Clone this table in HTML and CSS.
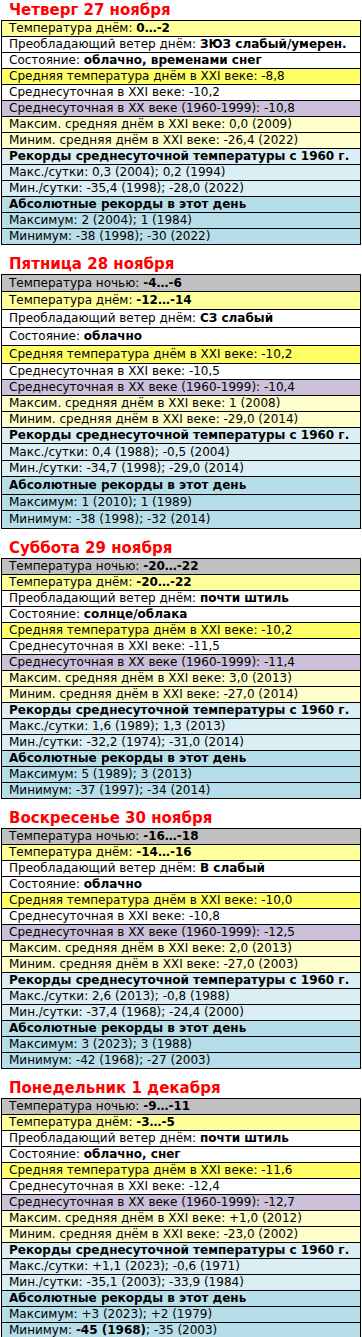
FILE: index.html
```html
<!DOCTYPE html>
<html lang="ru">
<head>
<meta charset="utf-8">
<title>Прогноз погоды</title>
<link rel="stylesheet" href="styles.css">
</head>
<body>

<section class="day">
  <h2 class="day-title">Четверг 27 ноября</h2>
  <table class="wx">
    <tr class="c-day"><td>Температура днём: <b>0…-2</b></td></tr>
    <tr class="c-white"><td>Преобладающий ветер днём: <b>ЗЮЗ слабый/умерен.</b></td></tr>
    <tr class="c-white"><td>Состояние: <b>облачно, временами снег</b></td></tr>
    <tr class="c-avg"><td>Средняя температура днём в XXI веке: -8,8</td></tr>
    <tr class="c-white"><td>Среднесуточная в XXI веке: -10,2</td></tr>
    <tr class="c-xx"><td>Среднесуточная в XX веке (1960-1999): -10,8</td></tr>
    <tr class="c-ext"><td>Максим. средняя днём в XXI веке: 0,0 (2009)</td></tr>
    <tr class="c-ext"><td>Миним. средняя днём в XXI веке: -26,4 (2022)</td></tr>
    <tr class="c-rec head"><td>Рекорды среднесуточной температуры с 1960 г.</td></tr>
    <tr class="c-rec"><td>Макс./сутки: 0,3 (2004); 0,2 (1994)</td></tr>
    <tr class="c-rec"><td>Мин./сутки: -35,4 (1998); -28,0 (2022)</td></tr>
    <tr class="c-abs head"><td>Абсолютные рекорды в этот день</td></tr>
    <tr class="c-abs"><td>Максимум: 2 (2004); 1 (1984)</td></tr>
    <tr class="c-abs"><td>Минимум: -38 (1998); -30 (2022)</td></tr>
  </table>
</section>

<section class="day">
  <h2 class="day-title">Пятница 28 ноября</h2>
  <table class="wx">
    <tr class="c-night mid"><td>Температура ночью: <b>-4…-6</b></td></tr>
    <tr class="c-day tall"><td>Температура днём: <b>-12…-14</b></td></tr>
    <tr class="c-white tall"><td>Преобладающий ветер днём: <b>СЗ слабый</b></td></tr>
    <tr class="c-white tall"><td>Состояние: <b>облачно</b></td></tr>
    <tr class="c-avg tall"><td>Средняя температура днём в XXI веке: -10,2</td></tr>
    <tr class="c-white"><td>Среднесуточная в XXI веке: -10,5</td></tr>
    <tr class="c-xx"><td>Среднесуточная в XX веке (1960-1999): -10,4</td></tr>
    <tr class="c-ext"><td>Максим. средняя днём в XXI веке: 1 (2008)</td></tr>
    <tr class="c-ext"><td>Миним. средняя днём в XXI веке: -29,0 (2014)</td></tr>
    <tr class="c-rec head"><td>Рекорды среднесуточной температуры с 1960 г.</td></tr>
    <tr class="c-rec mid"><td>Макс./сутки: 0,4 (1988); -0,5 (2004)</td></tr>
    <tr class="c-rec"><td>Мин./сутки: -34,7 (1998); -29,0 (2014)</td></tr>
    <tr class="c-abs head tall"><td>Абсолютные рекорды в этот день</td></tr>
    <tr class="c-abs"><td>Максимум: 1 (2010); 1 (1989)</td></tr>
    <tr class="c-abs tall"><td>Минимум: -38 (1998); -32 (2014)</td></tr>
  </table>
</section>

<section class="day">
  <h2 class="day-title">Суббота 29 ноября</h2>
  <table class="wx">
    <tr class="c-night"><td>Температура ночью: <b>-20…-22</b></td></tr>
    <tr class="c-day"><td>Температура днём: <b>-20…-22</b></td></tr>
    <tr class="c-white"><td>Преобладающий ветер днём: <b>почти штиль</b></td></tr>
    <tr class="c-white"><td>Состояние: <b>солнце/облака</b></td></tr>
    <tr class="c-avg"><td>Средняя температура днём в XXI веке: -10,2</td></tr>
    <tr class="c-white"><td>Среднесуточная в XXI веке: -11,5</td></tr>
    <tr class="c-xx"><td>Среднесуточная в XX веке (1960-1999): -11,4</td></tr>
    <tr class="c-ext"><td>Максим. средняя днём в XXI веке: 3,0 (2013)</td></tr>
    <tr class="c-ext"><td>Миним. средняя днём в XXI веке: -27,0 (2014)</td></tr>
    <tr class="c-rec head"><td>Рекорды среднесуточной температуры с 1960 г.</td></tr>
    <tr class="c-rec"><td>Макс./сутки: 1,6 (1989); 1,3 (2013)</td></tr>
    <tr class="c-rec"><td>Мин./сутки: -32,2 (1974); -31,0 (2014)</td></tr>
    <tr class="c-abs head"><td>Абсолютные рекорды в этот день</td></tr>
    <tr class="c-abs"><td>Максимум: 5 (1989); 3 (2013)</td></tr>
    <tr class="c-abs"><td>Минимум: -37 (1997); -34 (2014)</td></tr>
  </table>
</section>

<section class="day">
  <h2 class="day-title">Воскресенье 30 ноября</h2>
  <table class="wx">
    <tr class="c-night"><td>Температура ночью: <b>-16…-18</b></td></tr>
    <tr class="c-day"><td>Температура днём: <b>-14…-16</b></td></tr>
    <tr class="c-white"><td>Преобладающий ветер днём: <b>В слабый</b></td></tr>
    <tr class="c-white"><td>Состояние: <b>облачно</b></td></tr>
    <tr class="c-avg"><td>Средняя температура днём в XXI веке: -10,0</td></tr>
    <tr class="c-white"><td>Среднесуточная в XXI веке: -10,8</td></tr>
    <tr class="c-xx"><td>Среднесуточная в XX веке (1960-1999): -12,5</td></tr>
    <tr class="c-ext"><td>Максим. средняя днём в XXI веке: 2,0 (2013)</td></tr>
    <tr class="c-ext"><td>Миним. средняя днём в XXI веке: -27,0 (2003)</td></tr>
    <tr class="c-rec head"><td>Рекорды среднесуточной температуры с 1960 г.</td></tr>
    <tr class="c-rec"><td>Макс./сутки: 2,6 (2013); -0,8 (1988)</td></tr>
    <tr class="c-rec"><td>Мин./сутки: -37,4 (1968); -24,4 (2000)</td></tr>
    <tr class="c-abs head"><td>Абсолютные рекорды в этот день</td></tr>
    <tr class="c-abs"><td>Максимум: 3 (2023); 3 (1988)</td></tr>
    <tr class="c-abs"><td>Минимум: -42 (1968); -27 (2003)</td></tr>
  </table>
</section>

<section class="day">
  <h2 class="day-title">Понедельник 1 декабря</h2>
  <table class="wx">
    <tr class="c-night"><td>Температура ночью: <b>-9…-11</b></td></tr>
    <tr class="c-day"><td>Температура днём: <b>-3…-5</b></td></tr>
    <tr class="c-white"><td>Преобладающий ветер днём: <b>почти штиль</b></td></tr>
    <tr class="c-white"><td>Состояние: <b>облачно, снег</b></td></tr>
    <tr class="c-avg"><td>Средняя температура днём в XXI веке: -11,6</td></tr>
    <tr class="c-white"><td>Среднесуточная в XXI веке: -12,4</td></tr>
    <tr class="c-xx"><td>Среднесуточная в XX веке (1960-1999): -12,7</td></tr>
    <tr class="c-ext"><td>Максим. средняя днём в XXI веке: +1,0 (2012)</td></tr>
    <tr class="c-ext"><td>Миним. средняя днём в XXI веке: -23,0 (2002)</td></tr>
    <tr class="c-rec head"><td>Рекорды среднесуточной температуры с 1960 г.</td></tr>
    <tr class="c-rec"><td>Макс./сутки: +1,1 (2023); -0,6 (1971)</td></tr>
    <tr class="c-rec"><td>Мин./сутки: -35,1 (2003); -33,9 (1984)</td></tr>
    <tr class="c-abs head"><td>Абсолютные рекорды в этот день</td></tr>
    <tr class="c-abs"><td>Максимум: +3 (2023); +2 (1979)</td></tr>
    <tr class="c-abs"><td>Минимум: <b>-45 (1968)</b>; -35 (2003)</td></tr>
  </table>
</section>

</body>
</html>
```
FILE: styles.css
```css
html, body {
  margin: 0;
  padding: 0;
  background: #ffffff;
}

body {
  font-family: "DejaVu Sans", Verdana, sans-serif;
  color: #000000;
}

.day {
  display: flex;
  flex-direction: column;
  align-items: flex-start;
}

.day + .day {
  margin-top: 9px;
}

.day-title {
  margin: 0;
  padding-left: 9px;
  font-size: 15px;
  line-height: 20px;
  height: 20px;
  font-weight: bold;
  color: #ff0000;
}

.wx {
  border-collapse: collapse;
  width: 360px;
  margin-left: 1px;
  font-size: 12px;
}

.wx td {
  border: 1px solid #000000;
  padding: 0 0 0 7px;
  line-height: 15px;
  white-space: nowrap;
}

.wx .mid td {
  line-height: 16px;
}

.wx .tall td {
  line-height: 17px;
}

.wx b {
  font-weight: bold;
}

.wx .head td {
  font-weight: bold;
}

.c-night td { background: #c0c0c0; }
.c-day td   { background: #ffff99; }
.c-white td { background: #ffffff; }
.c-avg td   { background: #ffff66; }
.c-xx td    { background: #ccc0da; }
.c-ext td   { background: #ffffcc; }
.c-rec td   { background: #daeef3; }
.c-abs td   { background: #b7dee8; }
```
